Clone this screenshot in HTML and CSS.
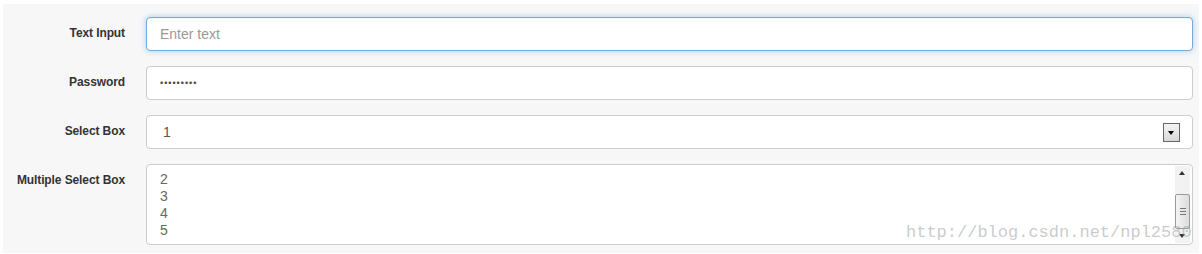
FILE: index.html
```html
<!DOCTYPE html>
<html>
<head>
    <title>Form Controls</title>
    <link rel="stylesheet" href="styles.css">
</head>
<body>
    <div class="panel">
        <form class="form-rows">
            <label class="form-label" for="text-input">Text Input</label>
            <input type="text" id="text-input" class="form-control focused" placeholder="Enter text">

            <label class="form-label" for="password">Password</label>
            <input type="password" id="password" class="form-control password" value="secret123">

            <label class="form-label">Select Box</label>
            <div class="form-control select-box">
                <span class="select-value">1</span>
                <span class="select-arrow"></span>
            </div>

            <label class="form-label">Multiple Select Box</label>
            <div class="form-control multi-select">
                <ul class="option-list">
                    <li>2</li>
                    <li>3</li>
                    <li>4</li>
                    <li>5</li>
                </ul>
                <div class="scrollbar">
                    <span class="scroll-up"></span>
                    <span class="scroll-thumb"><i></i><i></i><i></i></span>
                    <span class="scroll-down"></span>
                </div>
            </div>
        </form>
        <div class="watermark">http://blog.csdn.net/npl2580</div>
    </div>
</body>
</html>
```

FILE: styles.css
```css
body {
    margin: 0;
    background-color: #fff;
    font-family: "Liberation Sans", Arial, sans-serif;
}

.panel {
    position: relative;
    margin: 4px 3px 2px 3px;
    padding: 13px 6px 8px 0;
    background-color: #f7f7f7;
}

.form-rows {
    display: grid;
    grid-template-columns: 122px 1fr;
    column-gap: 21px;
    row-gap: 15px;
    margin: 0;
}

.form-label {
    padding-top: 9px;
    text-align: right;
    font-size: 12px;
    line-height: 15px;
    font-weight: bold;
    letter-spacing: -0.1px;
    color: #333;
}

.form-control {
    box-sizing: border-box;
    height: 34px;
    width: 100%;
    padding: 0 12px 0 13px;
    border: 1px solid #ccc;
    border-radius: 4px;
    background-color: #fff;
    font-family: "Liberation Sans", Arial, sans-serif;
    font-size: 14px;
    color: #555;
    outline: none;
}

.form-control::placeholder {
    color: #999;
}

.focused {
    border-color: #74abd8;
    box-shadow: inset 0 1px 1px rgba(0, 0, 0, 0.05), 0 0 6px rgba(102, 175, 233, 0.55);
}

.password {
    font-size: 9px;
    letter-spacing: 1px;
    color: #444;
}

.select-box {
    display: flex;
    align-items: center;
    justify-content: space-between;
    padding: 0 12px 0 16px;
}

.select-arrow {
    position: relative;
    box-sizing: border-box;
    width: 17px;
    height: 19px;
    border: 1px solid #666;
    background: linear-gradient(#f4f4f4, #d8d8d8);
}

.select-arrow::after {
    content: "";
    position: absolute;
    left: 4px;
    top: 7px;
    border-left: 3.5px solid transparent;
    border-right: 3.5px solid transparent;
    border-top: 4px solid #000;
}

.multi-select {
    display: flex;
    height: 81px;
    padding: 0 2px 0 13px;
}

.option-list {
    flex: 1;
    list-style: none;
    margin: 0;
    padding: 6px 0 0 0;
    line-height: 17px;
    color: #666;
}

.scrollbar {
    display: flex;
    flex-direction: column;
    width: 15px;
    margin: 1px 0;
    background-color: #f2f2f2;
}

.scroll-up,
.scroll-down {
    position: relative;
    height: 14px;
}

.scroll-up::after,
.scroll-down::after {
    content: "";
    position: absolute;
    left: 4px;
    border-left: 3.5px solid transparent;
    border-right: 3.5px solid transparent;
}

.scroll-up::after {
    top: 5px;
    border-bottom: 4px solid #333;
}

.scroll-down::after {
    top: 5px;
    border-top: 4px solid #333;
}

.scroll-thumb {
    display: flex;
    flex-direction: column;
    align-items: center;
    justify-content: center;
    gap: 2px;
    box-sizing: border-box;
    height: 35px;
    margin-top: auto;
    border: 1px solid #9a9a9a;
    border-radius: 2px;
    background: linear-gradient(90deg, #f4f4f4, #dcdcdc);
}

.scroll-thumb i {
    display: block;
    width: 6px;
    height: 1px;
    background-color: #777;
}

.watermark {
    position: absolute;
    left: 903px;
    top: 219px;
    font-family: "Liberation Mono", "Courier New", monospace;
    font-size: 17px;
    color: rgba(150, 150, 150, 0.5);
    pointer-events: none;
}
```
